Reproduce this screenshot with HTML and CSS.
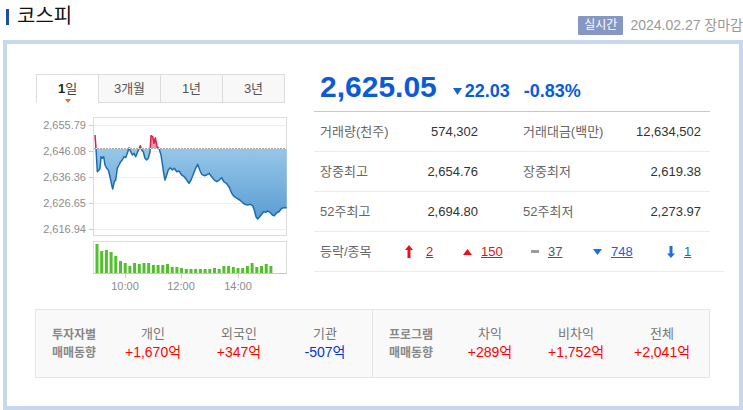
FILE: index.html
```html
<!DOCTYPE html>
<html lang="ko">
<head>
    <meta charset="UTF-8">
    <meta name="viewport" content="width=device-width, initial-scale=1.0">
    <title>코스피</title>
    <link rel="stylesheet" href="styles.css">
</head>
<body>

    <div class="head">
        <h2 class="title">코스피</h2>
        <div class="time">
            <span class="badge">실시간</span>
            <span class="date">2024.02.27 장마감</span>
        </div>
    </div>

    <div class="board">
        <div class="top">
            <div class="graph">
                <ul class="tabs">
                    <li class="on"><b>1</b>일</li>
                    <li>3개월</li>
                    <li>1년</li>
                    <li>3년</li>
                </ul>
                <svg id="chart" class="chart" viewBox="37 103 250 192" width="250" height="192">
                    <defs>
                        <linearGradient id="fillBlue" x1="0" y1="0" x2="0" y2="1">
                            <stop offset="0" stop-color="#a2cfec"/>
                            <stop offset="1" stop-color="#5b9dd3"/>
                        </linearGradient>
                        <clipPath id="below"><rect x="93" y="149" width="194" height="87"/></clipPath>
                        <clipPath id="above"><rect x="93" y="110" width="194" height="38"/></clipPath>
                    </defs>

                    <!-- 가격 영역 -->
                    <line class="grid" x1="94" x2="286" y1="125.5" y2="125.5"/>
                    <line class="grid" x1="94" x2="286" y1="151.5" y2="151.5"/>
                    <line class="grid" x1="94" x2="286" y1="177.5" y2="177.5"/>
                    <line class="grid" x1="94" x2="286" y1="203.5" y2="203.5"/>
                    <line class="grid" x1="94" x2="286" y1="229.5" y2="229.5"/>
                    <rect class="frame" x="93.5" y="117.5" width="193" height="118"/>
                    <path class="tick" d="M89 125.5H93M89 151.5H93M89 177.5H93M89 203.5H93M89 229.5H93"/>
                    <text class="ylabel" x="86" y="129">2,655.79</text>
                    <text class="ylabel" x="86" y="155">2,646.08</text>
                    <text class="ylabel" x="86" y="181">2,636.36</text>
                    <text class="ylabel" x="86" y="207">2,626.65</text>
                    <text class="ylabel" x="86" y="233">2,616.94</text>
                    <g id="price"></g>
                    <line class="base" x1="94" x2="286" y1="148.5" y2="148.5"/>

                    <!-- 거래량 -->
                    <rect class="frame" x="93.5" y="241.5" width="193" height="32"/>
                    <g id="volume"></g>
                    <line class="axis" x1="93" x2="287" y1="273.5" y2="273.5"/>
                    <path class="tick" d="M125.5 274V278M181.5 274V278M238.5 274V278"/>
                    <text class="xlabel" x="125" y="290">10:00</text>
                    <text class="xlabel" x="181" y="290">12:00</text>
                    <text class="xlabel" x="238" y="290">14:00</text>
                </svg>
            </div>

            <div class="summary">
                <div class="price-row">
                    <span class="price">2,625.05</span>
                    <span class="change">
                        <svg class="tri" width="9" height="7" viewBox="0 0 9 7"><path d="M0 0H9L4.5 7Z"/></svg>22.03
                    </span>
                    <span class="rate">-0.83%</span>
                </div>
                <div class="stat-row">
                    <div class="stat"><span class="label">거래량(천주)</span><span class="value">574,302</span></div>
                    <div class="stat"><span class="label">거래대금(백만)</span><span class="value">12,634,502</span></div>
                </div>
                <div class="stat-row">
                    <div class="stat"><span class="label">장중최고</span><span class="value">2,654.76</span></div>
                    <div class="stat"><span class="label">장중최저</span><span class="value">2,619.38</span></div>
                </div>
                <div class="stat-row">
                    <div class="stat"><span class="label">52주최고</span><span class="value">2,694.80</span></div>
                    <div class="stat"><span class="label">52주최저</span><span class="value">2,273.97</span></div>
                </div>
                <div class="updown">
                    <span class="label">등락/종목</span>
                    <span class="item red w58">
                        <svg class="ico" width="8" height="13" viewBox="0 0 8 13"><path d="M4 0L8 5H5.5V13H2.5V5H0Z"/></svg>
                        <a href="#" class="gap13">2</a>
                    </span>
                    <span class="item red w68">
                        <svg class="ico" width="9" height="6" viewBox="0 0 9 6"><path d="M4.5 0L9 6H0Z"/></svg>
                        <a href="#">150</a>
                    </span>
                    <span class="item gray w62">
                        <svg class="ico" width="8" height="3" viewBox="0 0 8 3"><rect width="8" height="3"/></svg>
                        <a href="#">37</a>
                    </span>
                    <span class="item blue w74">
                        <svg class="ico" width="9" height="6" viewBox="0 0 9 6"><path d="M0 0H9L4.5 6Z"/></svg>
                        <a href="#">748</a>
                    </span>
                    <span class="item blue">
                        <svg class="ico" width="8" height="12" viewBox="0 0 8 12"><path d="M2.5 0H5.5V7.5H8L4 12L0 7.5H2.5Z"/></svg>
                        <a href="#">1</a>
                    </span>
                </div>
            </div>
        </div>

        <div class="trend">
            <div class="trend-group">
                <div class="trend-title">투자자별<br>매매동향</div>
                <div class="trend-item"><span class="name">개인</span><span class="num up">+1,670억</span></div>
                <div class="trend-item"><span class="name">외국인</span><span class="num up">+347억</span></div>
                <div class="trend-item"><span class="name">기관</span><span class="num down">-507억</span></div>
            </div>
            <div class="trend-group">
                <div class="trend-title">프로그램<br>매매동향</div>
                <div class="trend-item"><span class="name">차익</span><span class="num up">+289억</span></div>
                <div class="trend-item"><span class="name">비차익</span><span class="num up">+1,752억</span></div>
                <div class="trend-item"><span class="name">전체</span><span class="num up">+2,041억</span></div>
            </div>
        </div>
    </div>

    <script>
        const NS = "http://www.w3.org/2000/svg";
        const base = 148.5;

        // 분봉 지수 (페이지 좌표 그대로)
        const pts = [
            [95,135],[96,148.3],[97.3,171.7],[99,170],[100,168.3],[101,156.7],[102.3,158.3],[103.7,156.7],
            [105,165],[106.7,168.3],[108.3,170],[110,176.7],[111.7,185],[112.7,189],[114.3,181.7],[115.7,180],
            [117.3,168.3],[119,165],[120.7,161.7],[122.3,160],[124,156.7],[125.7,157.7],[127.3,153.3],[129,147.7],
            [130.7,151.7],[132.3,155],[134,153.3],[135.7,156.7],[137.7,151.7],[139.3,148.3],[140.3,145.7],[141.7,150],
            [143.3,151.7],[145,158.3],[146.7,160],[148.3,158.3],[150,151.7],[151,135.7],[152.7,136.7],[154,143.3],
            [155.3,137.7],[157,146.7],[159,148.3],[161,155],[162.3,163.3],[163.7,173.3],[165,180],[166.7,175],
            [168.3,170],[170.3,167.7],[172.3,170],[174.3,168.3],[176.7,171.7],[179,171],[181.7,175],[184.3,176.7],
            [186.7,180],[189,183.3],[191,180],[193,175],[195.7,168.3],[197.7,164.3],[199.7,170],[201.7,174.3],
            [204.3,175.7],[206.7,175],[209,173.3],[211.7,176.7],[214.3,180],[216.7,181.7],[219,180.3],[221.7,177.7],
            [223.7,181.7],[226.3,183.3],[229,186.7],[231.7,193.3],[234.3,196.7],[237,198.3],[239.7,200],[242.3,202.3],
            [245,204.3],[247.7,205],[250.3,204.3],[252.7,205.7],[254.3,210],[256,216.7],[257.7,219],[259.7,216.7],
            [261.7,214.3],[263.7,211.7],[265.7,212.3],[267.7,211],[270,212.3],[272.3,215],[274.3,215.7],[276.7,212.7],
            [279,211.7],[281.7,208.3],[284.3,207.7],[286.7,207.7]
        ];

        const vols = [29,22,23,21,17,12,10,7,10,9,10,10,8,8,8,9,6,6,5,4,4,4,4,4,4,5,4,7,7,6,5,5,7,10,6,7,9,7];

        const linePath = pts.map((p, i) => (i ? 'L' : 'M') + p[0] + ' ' + p[1]).join(' ');
        const areaPath = 'M95 ' + base + ' ' + pts.map(p => 'L' + p[0] + ' ' + p[1]).join(' ') + ' L286.7 ' + base + ' Z';

        function addPath(parent, d, cls, clip) {
            const path = document.createElementNS(NS, "path");
            path.setAttribute("d", d);
            path.setAttribute("class", cls);
            path.setAttribute("clip-path", "url(#" + clip + ")");
            parent.appendChild(path);
        }

        const price = document.getElementById('price');
        addPath(price, areaPath, "area-down", "below");
        addPath(price, areaPath, "area-up", "above");
        addPath(price, linePath, "line-down", "below");
        addPath(price, linePath, "line-up", "above");

        const volume = document.getElementById('volume');
        vols.forEach((h, i) => {
            const bar = document.createElementNS(NS, "rect");
            bar.setAttribute("x", 95.5 + i * 4.7);
            bar.setAttribute("y", 273 - h);
            bar.setAttribute("width", 3);
            bar.setAttribute("height", h);
            bar.setAttribute("class", "bar");
            volume.appendChild(bar);
        });
    </script>
</body>
</html>
```

FILE: styles.css
```css
body {
    margin: 0;
    font-family: "Liberation Sans", "Noto Sans CJK KR", sans-serif;
    color: #333;
    background-color: #fff;
    overflow: hidden;
}
.head {
    display: flex;
    justify-content: space-between;
    align-items: flex-start;
    height: 40px;
    padding-left: 6px;
}
.title {
    margin: 0;
    font-size: 20px;
    font-weight: normal;
    line-height: 33px;
    color: #111;
    display: flex;
    align-items: center;
}
.title::before {
    content: "";
    display: inline-block;
    width: 3px;
    height: 16px;
    background-color: #1f4fa2;
    margin-right: 8px;
}
.time {
    display: flex;
    align-items: center;
    margin-top: 16px;
    white-space: nowrap;
}
.badge {
    display: inline-block;
    height: 19px;
    line-height: 19px;
    padding: 0 6px;
    font-size: 12px;
    color: #fff;
    background-color: #8797c4;
    border-radius: 1px;
}
.date {
    margin-left: 7px;
    font-size: 14px;
    line-height: 19px;
    color: #999;
}
.board {
    box-sizing: border-box;
    width: 740px;
    height: 370px;
    margin-left: 3px;
    border: 4px solid #c7d8ee;
    padding: 30px 0 0 29px;
}
.top {
    display: flex;
    align-items: flex-start;
}
.graph {
    width: 251px;
}
.tabs {
    display: flex;
    margin: 0;
    padding: 0;
    list-style: none;
    height: 29px;
}
.tabs li {
    position: relative;
    box-sizing: border-box;
    width: 63px;
    height: 29px;
    margin-left: -1px;
    border: 1px solid #dcdcdc;
    background-color: #f8f8f8;
    text-align: center;
    font-size: 13px;
    line-height: 27px;
    color: #555;
}
.tabs li:first-child {
    margin-left: 0;
}
.tabs li.on {
    background-color: #fff;
    border-bottom-color: #fff;
    color: #444;
}
.tabs li.on b {
    font-weight: bold;
    color: #222;
}
.tabs li.on::after {
    content: "";
    position: absolute;
    left: 28px;
    bottom: -1px;
    border-left: 3px solid transparent;
    border-right: 3px solid transparent;
    border-top: 4px solid #f2682a;
}
.chart {
    display: block;
    margin-left: 1px;
}
.frame {
    fill: none;
    stroke: #dcdcdc;
}
.grid {
    stroke: #efefef;
}
.tick {
    stroke: #ccc;
    fill: none;
}
.axis {
    stroke: #c8c8c8;
}
.base {
    stroke: #a8a8a8;
    stroke-dasharray: 2 1;
}
.ylabel {
    font-family: "Liberation Sans", sans-serif;
    font-size: 11px;
    fill: #8c8c8c;
    text-anchor: end;
}
.xlabel {
    font-family: "Liberation Sans", sans-serif;
    font-size: 11px;
    fill: #8c8c8c;
    text-anchor: middle;
}
.area-down {
    fill: url(#fillBlue);
}
.area-up {
    fill: #ee93a8;
}
.line-down {
    fill: none;
    stroke: #1d6cb3;
    stroke-width: 1.5;
    stroke-linejoin: round;
}
.line-up {
    fill: none;
    stroke: #d8234d;
    stroke-width: 1.5;
    stroke-linejoin: round;
}
.bar {
    fill: #52bf2b;
}
.summary {
    width: 396px;
    margin-left: 27px;
    margin-top: -2px;
}
.price-row {
    display: flex;
    align-items: baseline;
    box-sizing: border-box;
    height: 40px;
    padding-left: 6px;
    border-bottom: 1px solid #c9c9c9;
    color: #0a5ad9;
    font-weight: bold;
}
.price {
    font-size: 30px;
    line-height: 30px;
}
.change {
    margin-left: 16px;
    font-size: 18px;
    line-height: 30px;
}
.tri {
    fill: #1560d8;
    margin-right: 3px;
    vertical-align: 2px;
}
.rate {
    margin-left: 14px;
    font-size: 18px;
    line-height: 30px;
}
.stat-row {
    display: grid;
    grid-template-columns: 158px 178px;
    column-gap: 45px;
    align-items: center;
    box-sizing: border-box;
    height: 40px;
    padding: 0 9px 0 6px;
    border-bottom: 1px solid #ececec;
}
.stat {
    display: flex;
    justify-content: space-between;
    font-size: 13px;
    line-height: 18px;
}
.label {
    color: #666;
}
.value {
    color: #333;
}
.updown {
    display: flex;
    align-items: center;
    box-sizing: border-box;
    height: 40px;
    margin-right: -14px;
    padding-left: 6px;
    border-bottom: 1px solid #ececec;
    font-size: 13px;
    line-height: 18px;
}
.updown .label {
    width: 85px;
}
.item {
    display: flex;
    align-items: center;
}
.item .ico {
    margin-right: 9px;
}
.item a {
    text-decoration: underline;
}
.item a.gap13 {
    margin-left: 4px;
}
.w58 { width: 58px; }
.w68 { width: 68px; }
.w62 { width: 62px; }
.w74 { width: 74px; }
.red { fill: #e8101e; }
.red a { color: #e0101c; }
.gray { fill: #9a9a9a; }
.gray a { color: #555; }
.blue { fill: #1f6ee0; }
.blue a { color: #1a5fd6; }
.trend {
    display: flex;
    box-sizing: border-box;
    width: 675px;
    height: 69px;
    margin-top: 14px;
    margin-left: -1px;
    border: 1px solid #e6e6e6;
    background-color: #f9f9f9;
}
.trend-group {
    flex: 1;
    display: flex;
    align-items: center;
    padding-left: 16px;
}
.trend-group + .trend-group {
    border-left: 1px solid #e6e6e6;
}
.trend-title {
    width: 58px;
    font-size: 12px;
    line-height: 18px;
    font-weight: bold;
    color: #888;
}
.trend-item {
    width: 86px;
    display: flex;
    flex-direction: column;
    align-items: center;
}
.name {
    font-size: 13px;
    line-height: 18px;
    color: #777;
}
.num {
    font-size: 14px;
    line-height: 19px;
}
.num.up {
    color: #f00;
}
.num.down {
    color: #0035d6;
}
```
